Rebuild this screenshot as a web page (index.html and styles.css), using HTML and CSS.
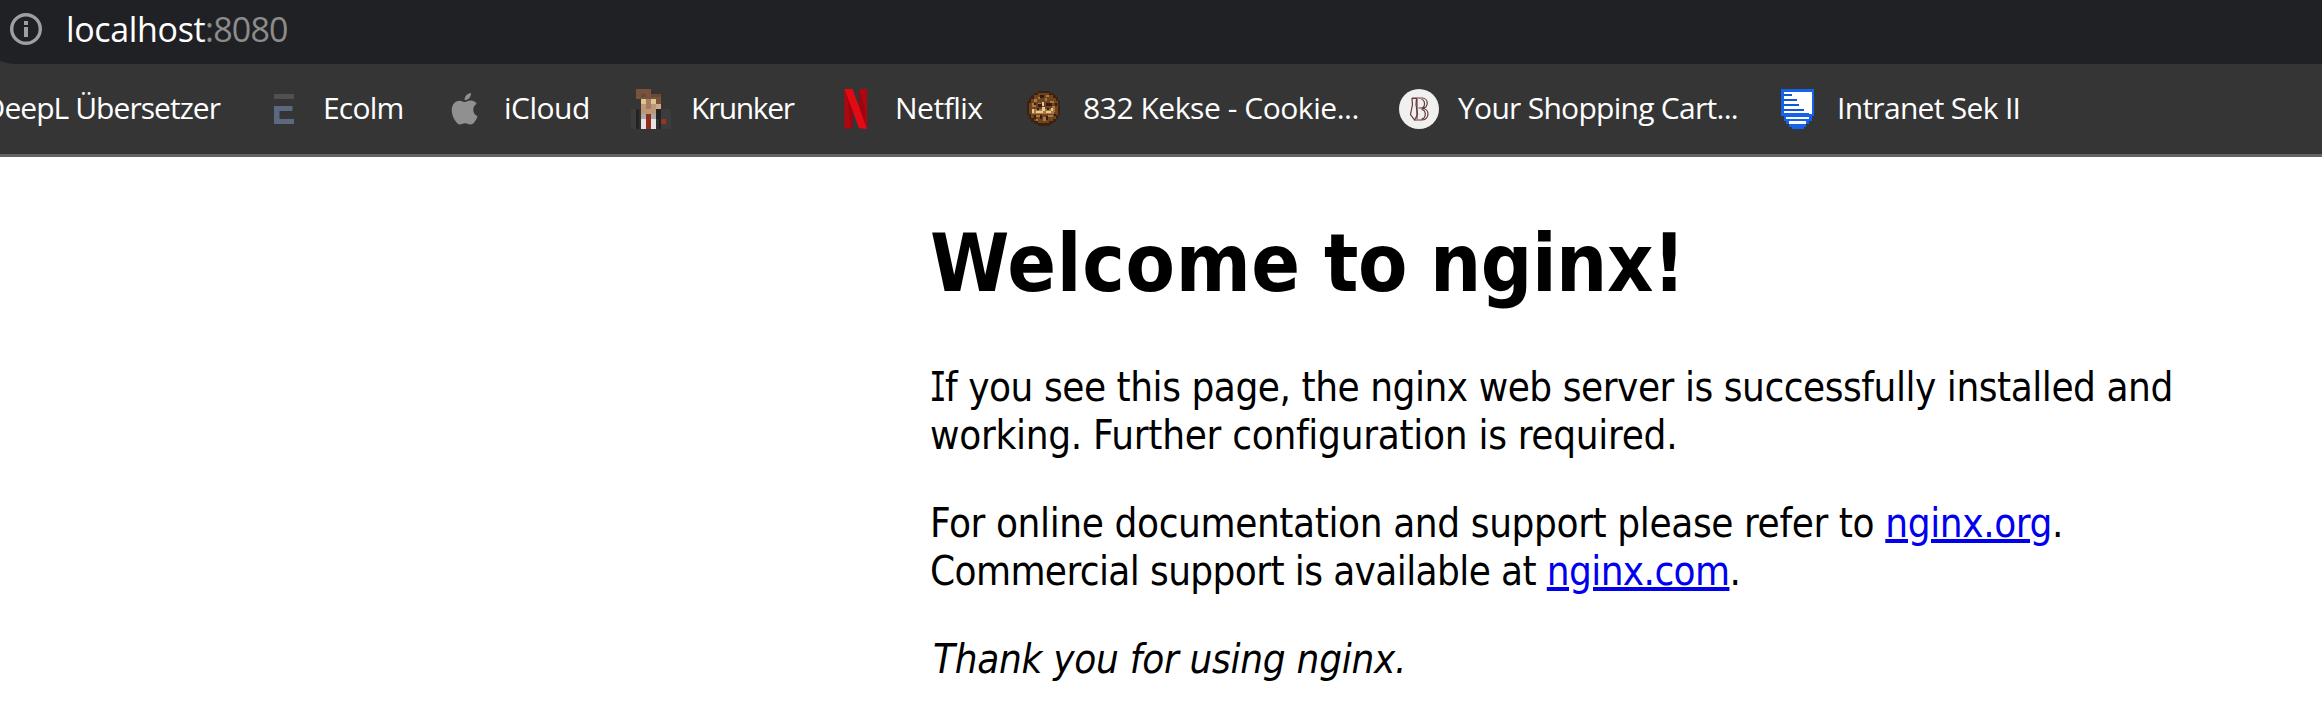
FILE: index.html
```
<!DOCTYPE html>
<html lang="en">
<head>
<meta charset="utf-8">
<title>Welcome to nginx!</title>
<link rel="stylesheet" href="styles.css">
</head>
<body>
<header class="chrome">
  <div class="address">
    <svg class="info" width="32" height="32" viewBox="0 0 32 32"><circle cx="16" cy="16" r="14.3" fill="none" stroke="#9aa0a6" stroke-width="3.4"/><path d="M14 8h4v4h-4zM14 14h4v10h-4z" fill="#9aa0a6"/></svg>
    <span class="host">localhost</span><span class="port">:8080</span>
  </div>
  <nav class="bookmarks">
    <a class="mark deepl"><span>DeepL Übersetzer</span></a>
    <a class="mark ecolm">
      <svg class="icon" viewBox="0 0 40 40"><path d="M10 5h20v5H10z" fill="#505050"/><path d="M10 17h18.500v5H15.500v8H30v5H10z" fill="#5a6880"/></svg>
      <span>Ecolm</span></a>
    <a class="mark icloud">
      <svg class="icon" viewBox="0 0 40 40"><path transform="translate(4.800 3.900) scale(1.320)" fill="#909090" d="M12.152 6.896c-.948 0-2.415-1.078-3.960-1.040-2.040.027-3.910 1.183-4.961 3.014-2.117 3.675-.546 9.103 1.519 12.090 1.013 1.454 2.208 3.090 3.792 3.039 1.520-.065 2.090-.987 3.935-.987 1.831 0 2.350.987 3.960.948 1.637-.026 2.676-1.480 3.676-2.948 1.156-1.688 1.636-3.325 1.662-3.415-.039-.013-3.182-1.221-3.220-4.857-.026-3.040 2.480-4.494 2.597-4.559-1.429-2.090-3.623-2.324-4.390-2.376-2-.156-3.675 1.090-4.610 1.090zM15.530 3.830c.843-1.012 1.400-2.427 1.245-3.830-1.207.052-2.662.805-3.532 1.818-.780.896-1.454 2.338-1.273 3.714 1.338.104 2.715-.688 3.559-1.701"/></svg>
      <span>iCloud</span></a>
    <a class="mark krunker">
      <svg class="icon" viewBox="0 0 40 40" shape-rendering="crispEdges">
        <path d="M0 20h40v20H0z" fill="#3c3c3c"/><path d="M5 20h25v20H5z" fill="#222424"/><path d="M7.500 20h2.500v20H7.500zM25 30h2.500v10H25z" fill="#303232"/>
        <path d="M5 0h15v5h10v10h-5v-5H5z" fill="#79523d"/><path d="M10 5h5v2.500h-5zM20 5h10v2.500H20z" fill="#6b4734"/>
        <path d="M10 10h15v5h5v5h-5v5H10z" fill="#bd9878"/><path d="M10 10h5v5h-5zM20 10h5v5h-5z" fill="#dac790"/><path d="M15 10h5v10h-5z" fill="#a8785f"/><path d="M25 15h5v5h-5z" fill="#d0aa82"/>
        <path d="M10 25h15v5H10z" fill="#aaa8a8"/><path d="M10 30h15v10H10z" fill="#e8e2e2"/><path d="M15 25h5v15h-5z" fill="#8e2e1c"/><path d="M30 30h5v5h-5z" fill="#98351f"/>
      </svg>
      <span>Krunker</span></a>
    <a class="mark netflix">
      <svg class="icon" viewBox="0 0 40 40"><path d="M9.500 0h8v39L9.500 40zM24 0h8v40l-8-1z" fill="#b1060f"/><path d="M12 6l6 16v17l-2 .3zM24 0v19l6 16V20z" fill="#830810" opacity=".55"/><path d="M9.500 0H17.500L32 40l-8-1z" fill="#e50914"/></svg>
      <span>Netflix</span></a>
    <a class="mark cookie">
      <svg class="icon" viewBox="0 0 40 40" shape-rendering="crispEdges">
        <path d="M14 2h12v2h4v2h2v2h2v4h2v14h-2v4h-2v3h-3v2h-3v2H14v-2h-4v-2H7v-3H5v-4H3V12h2V9h2V6h3V4h4z" fill="#3c2110"/>
        <path d="M14 4h11v2h4v3h3v3h2v14h-2v4h-3v2h-4v2H14v-2h-4v-3H7v-4H5V14h2v-4h3V6h4z" fill="#6f441e"/>
        <path d="M14 8h2v2h-2zM22 6h3v2h-3zM10 10h3v3h-3zM8 14h4v4H8zM14 14h3v4h-3zM21 9h2v3h-2zM26 12h4v2h-4zM28 17h3v6h-3zM8 20h22v5H8zM12 26h4v2h-4zM24 26h5v2h-5zM19 28h3v4h-3zM12 30h2v2h-2z" fill="#a8783f"/>
        <path d="M18 13h2v4h-2zM8 20h2v4H8zM12 22h7v2h-7zM18 18h3v4h-3zM22 22h5v2h-5zM27 19h2v3h-2z" fill="#e5c995"/>
        <path d="M16 6h4v3h-4zM10 14h2v2h-2zM14 15h4v3h-4zM22 14h6v3h-6zM13 19h2v2h-2zM23 19h2v2h-2zM31 14h2v3h-2zM10 26h2v4h-2zM16 26h2v4h-2zM22 27h2v4h-2zM30 25h2v2h-2z" fill="#371b18"/>
      </svg>
      <span>832 Kekse - Cookie...</span></a>
    <a class="mark shop">
      <svg class="icon" viewBox="0 0 40 40"><circle cx="20" cy="20" r="20" fill="#f1f0ef"/><g fill="none" stroke="#63393b" stroke-width="1.200"><path d="M13 9h10c7 0 7 10 0 10.500 8 0 8 11 0 11.500h-7.500M18 10v20M22.500 10.500c4 .5 4 8 0 8.500h-3M22.500 20.500c5 .5 5 9 0 9.500"/><path d="M13 9.500h4.500l-.5 6 1.500 10-3 5.500-4-5.500 2-10z"/></g></svg>
      <span>Your Shopping Cart...</span></a>
    <a class="mark intranet">
      <svg class="icon" viewBox="0 0 40 40" shape-rendering="crispEdges"><path d="M4 0h33v27h-2v5h-3v3h-3v3h-2v2H15v-2h-3v-3H9v-3H7v-5H4z" fill="#1463ea"/><path d="M7 3h28v22h-3v-1H7z" fill="#fff"/><path d="M7 5h8v2H7zM7 10h13v2H7zM7 15h15v2H7zM7 20h20v2H7z" fill="#1256d8"/><path d="M9 28h23v2H9zM12 32h17v3H12z" fill="#fff"/></svg>
      <span>Intranet Sek II</span></a>
  </nav>
</header>
<main class="page">
  <h1><span class="first">Welcome</span> to nginx!</h1>
  <p><span class="l1"><span class="slab">I</span>f you see this page, the nginx web server is successfully installed and</span><br><span class="l2">working. Further configuration is required.</span></p>
  <p><span class="l3">For online documentation and support please refer to <a href="#">nginx.org</a>.</span><br><span class="l4">Commercial support is available at <a href="#">nginx.com</a>.</span></p>
  <p><em>Thank you for using nginx.</em></p>
</main>
</body>
</html>
```
FILE: styles.css
```
body {
  margin: 0;
  height: 712px;
  overflow: hidden;
  background: #fff;
  color: #000;
}

/* Browser bars */
.chrome {
  background: #353535;
  border-bottom: 3px solid #646464;
  color: #fff;
  font-family: "Open Sans", "Noto Sans", sans-serif;
  overflow: hidden;
}
.address {
  box-sizing: border-box;
  display: flex;
  align-items: center;
  height: 64px;
  margin-left: -18px;
  padding: 0 0 6px 28px;
  border-bottom-left-radius: 32px;
  background: #202124;
  font-size: 34px;
  white-space: nowrap;
}
.info { margin-right: 24px; }
.host { width: 139px; letter-spacing: -0.35px; }
.port { color: #8c8c8c; letter-spacing: -0.8px; }

.bookmarks {
  display: grid;
  grid-template-columns: 264px 180px 187px 204px 189px 375px 378px 1fr;
  align-items: center;
  height: 90px;
  font-size: 30px;
  white-space: nowrap;
}
.mark { display: flex; align-items: center; }
.mark span { padding-bottom: 3px; }
.icon { width: 40px; height: 40px; flex: none; margin-right: 19px; }
.deepl { justify-content: flex-end; padding-right: 44px; letter-spacing: -0.95px; }
.ecolm { letter-spacing: -0.8px; }
.icloud { letter-spacing: -0.5px; }
.icloud .icon, .krunker .icon, .netflix .icon, .intranet .icon { margin-right: 20px; }
.krunker { letter-spacing: -1.4px; }
.netflix { letter-spacing: -0.5px; }
.cookie { letter-spacing: -0.45px; }
.shop { letter-spacing: -0.72px; }
.intranet { letter-spacing: -0.7px; }

/* Page content */
.page {
  width: 1300px;
  padding: 59px 0 0 930px;
  font: 40px/48px "DejaVu Sans Condensed", "DejaVu Sans", sans-serif;
  font-stretch: condensed;
  white-space: nowrap;
}
h1 {
  margin: 0 0 51px;
  font-size: 80px;
  line-height: 96px;
  letter-spacing: -0.45px;
  word-spacing: -1.5px;
}
.first { letter-spacing: 0.7px; }
p { margin: 0 0 40px; }
a[href] {
  color: #00e;
  text-decoration-thickness: 4px;
  text-underline-offset: 2px;
}
.l1 { letter-spacing: -0.45px; }
.slab {
  display: inline-block;
  width: 24px;
  margin: 0 -4.5px;
  line-height: 40px;
  font-family: "DejaVu Sans Mono", monospace;
  letter-spacing: 0;
  transform: scaleX(0.72);
}
.l2 { letter-spacing: -0.28px; }
.l3 { letter-spacing: -0.38px; }
.l4 { letter-spacing: -0.6px; }
em { padding-left: 3px; letter-spacing: -0.27px; }
```
